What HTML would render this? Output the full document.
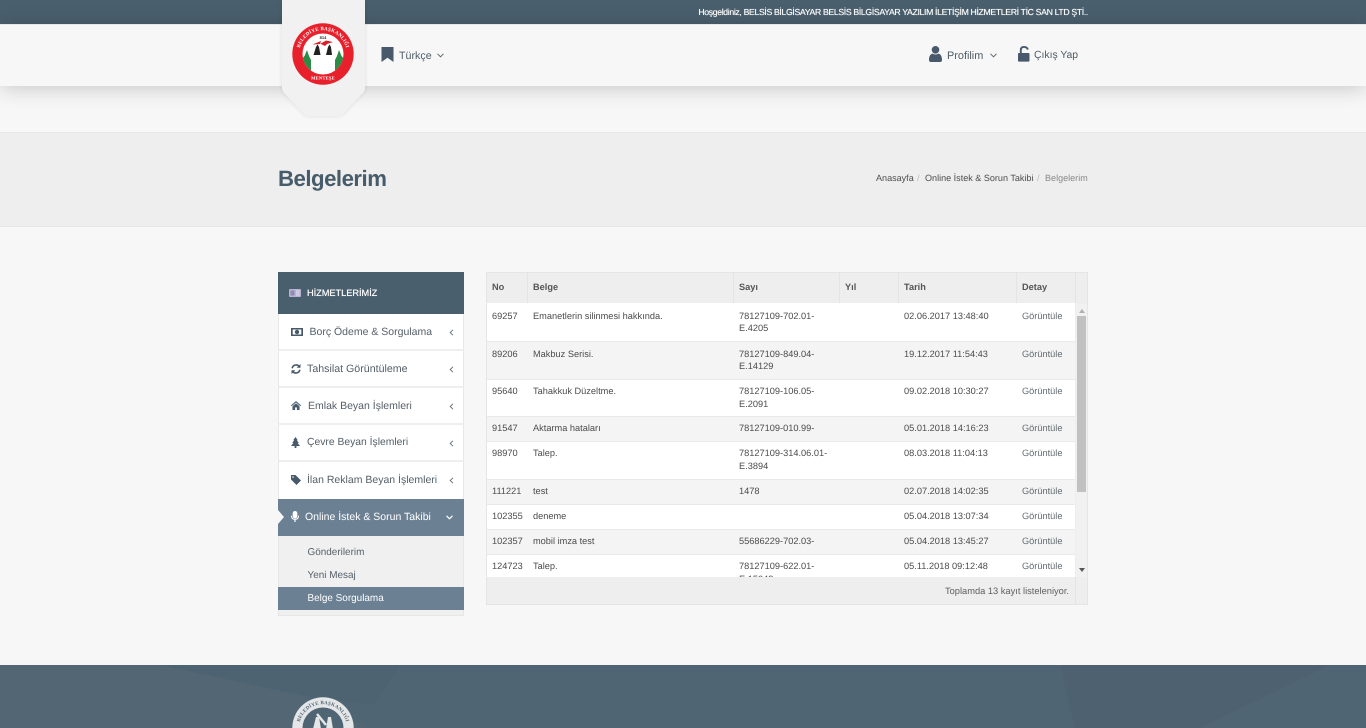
<!DOCTYPE html>
<html lang="tr">
<head>
<meta charset="utf-8">
<title>Belgelerim</title>
<style>
*{box-sizing:border-box}
html,body{margin:0;padding:0;width:1366px;height:728px;overflow:hidden;background:#f7f7f7;font-family:"Liberation Sans",sans-serif;text-rendering:geometricPrecision}
.a{position:absolute;white-space:nowrap}
#top{left:0;top:0;width:1366px;height:24px;background:#4a5f6d}
#hdr{left:0;top:24px;width:1366px;height:62px;background:#f7f7f7;box-shadow:0 2px 22px rgba(0,0,0,.2);border-top:1px solid #e4e6e7}
#band{left:0;top:132px;width:1366px;height:94.5px;background:#eeeeee;border-top:1px solid #e8e8e8;border-bottom:1px solid #e8e8e8}
#foot{left:0;top:665px;width:1366px;height:63px;background:#506573;overflow:hidden}
.t{font-size:10.7px;color:#4f5c66}
.crumb{font-size:9.05px;color:#4d4d4d;top:173px}
.mi{left:278px;width:186px;height:37px;background:#fff;border-left:1px solid #e8e8e8;border-right:1px solid #e8e8e8;border-bottom:2px solid #efefef}
.ml{font-size:10.5px;color:#545f68}
.sl{font-size:9.95px;color:#56606a}
.row{left:487px;width:588px}
.c{font-size:9.22px;color:#4c4c4c;line-height:12.6px}
.h{font-size:9.22px;font-weight:bold;color:#555;top:282px}
.sep{top:272px;width:1px;height:31px;background:#e4e4e4}
svg{position:absolute;overflow:visible}
</style>
</head>
<body>
<div class="a" id="top"></div>
<div class="a" style="right:278px;top:6px;font-size:8.7px;line-height:13px;color:#fff;letter-spacing:-.345px;text-shadow:0 0 .5px #fff;">Hoşgeldiniz, BELSİS BİLGİSAYAR BELSİS BİLGİSAYAR YAZILIM İLETİŞİM HİZMETLERİ TİC SAN LTD ŞTİ..</div>
<div class="a" id="hdr"></div>

<!-- banner -->
<svg style="left:275px;top:0" width="97" height="125" viewBox="0 0 97 125">
<defs><filter id="bs" x="-20%" y="-20%" width="140%" height="140%"><feGaussianBlur stdDeviation="2.5"/></filter></defs>
<path d="M7 0H90V88Q90 91 87 94L70 112Q67 116 63 116H34Q30 116 27 112L10 94Q7 91 7 88Z" fill="#000" opacity=".1" filter="url(#bs)"/>
<path d="M7 0H90V88Q90 91 87 94L70 112Q67 116 63 116H34Q30 116 27 112L10 94Q7 91 7 88Z" fill="#f1f1f1"/>
</svg>

<!-- logo -->
<svg style="left:292px;top:23px" width="62" height="62" viewBox="0 0 62 62">
<defs>
<path id="arcTop" d="M7.5 36A24 24 0 1 1 54.5 36"/>
<clipPath id="inner"><circle cx="31" cy="31" r="20.5"/></clipPath>
</defs>
<circle cx="31" cy="31" r="30.7" fill="#e7202c"/>
<circle cx="31" cy="31" r="20.5" fill="#fff"/>
<g clip-path="url(#inner)">
<path d="M10 50V36L12.5 33L15 27L17 33L19 37L19 50Z" fill="#2b8c45"/>
<path d="M52 50V36L49.5 33L47 27L45 33L43 37L43 50Z" fill="#2b8c45"/>
</g>
<path d="M21.5 32L24 24L25.5 21.5L27 24L28.5 32Z" fill="#222"/>
<path d="M34 32L36 24L37.5 21.5L39 24L40 32Z" fill="#222"/>
<path d="M20.5 21.5L29 18L28 21L34 17.5L41 19L35 21L33 23L29 21Z" fill="#d81f2a"/>
<text font-size="4" font-family="Liberation Sans,sans-serif" font-weight="bold" fill="#333" x="31" y="16" text-anchor="middle">814</text>
<text font-size="5" font-family="Liberation Serif,serif" font-weight="bold" fill="#fff" letter-spacing=".2"><textPath href="#arcTop" startOffset="50%" text-anchor="middle">BELEDİYE BAŞKANLIĞI</textPath></text>
<text font-size="4.6" font-family="Liberation Serif,serif" font-weight="bold" fill="#fff" x="31" y="56.5" text-anchor="middle" letter-spacing=".2">MENTEŞE</text>
</svg>

<!-- header nav -->
<svg style="left:381px;top:47px" width="13" height="15" viewBox="0 0 13 15"><path d="M.5 0H12.5V15L6.5 10.8L.5 15Z" fill="#47596a"/></svg>
<div class="a t" style="left:399px;top:49.5px;">Türkçe</div>
<svg style="left:437px;top:52.5px" width="7" height="5" viewBox="0 0 7 5"><path d="M.5.8L3.5 3.8L6.5.8" fill="none" stroke="#5b6770" stroke-width="1"/></svg>

<svg style="left:929px;top:46px" width="13" height="16" viewBox="0 0 13 16"><circle cx="6.5" cy="3.8" r="3.8" fill="#47596a"/><path d="M0 14C0 10 1.5 8 3.5 7.6Q6.5 9.3 9.5 7.6C11.5 8 13 10 13 14Q13 16 11 16H2Q0 16 0 14Z" fill="#47596a"/></svg>
<div class="a t" style="left:947px;top:49.5px;font-size:10.9px">Profilim</div>
<svg style="left:990px;top:52.5px" width="7" height="5" viewBox="0 0 7 5"><path d="M.5.8L3.5 3.8L6.5.8" fill="none" stroke="#5b6770" stroke-width="1"/></svg>

<svg style="left:1018px;top:46px" width="12" height="16" viewBox="0 0 12 16"><path d="M2.8 7V4Q2.8.9 6 .9T9.8 3.6" fill="none" stroke="#47596a" stroke-width="1.9"/><rect x="0" y="7" width="11.5" height="8.6" rx="1" fill="#47596a"/></svg>
<div class="a t" style="left:1034px;top:49.5px;font-size:10.4px">Çıkış Yap</div>

<!-- page title -->
<div class="a" id="band"></div>
<div class="a" style="left:278px;top:165px;font-size:22.2px;line-height:27px;color:#475c6b;font-weight:bold;letter-spacing:-.5px;">Belgelerim</div>
<div class="a crumb" style="left:876px;">Anasayfa</div>
<div class="a crumb" style="left:917px;color:#bbb;">/</div>
<div class="a crumb" style="left:925px;">Online İstek &amp; Sorun Takibi</div>
<div class="a crumb" style="left:1037px;color:#bbb;">/</div>
<div class="a crumb" style="left:1045px;color:#888;">Belgelerim</div>

<!-- sidebar -->
<div class="a" style="left:278px;top:272px;width:186px;height:344px;background:#f0f0f0;border:1px solid #e6e6e6"></div>
<div class="a" style="left:278px;top:272px;width:186px;height:42px;background:#4a5f6e"></div>
<svg style="left:289px;top:289px" width="12" height="8" viewBox="0 0 12 8"><rect width="12" height="8" rx="1" fill="#b9b4d6"/><rect x="1.5" y="1.5" width="4" height="5" fill="#8f8db3"/><path d="M7 2H10.5M7 4H10.5M7 6H10.5" stroke="#eee" stroke-width=".8"/></svg>
<div class="a" style="left:307px;top:287px;font-size:9.25px;line-height:12px;color:#fff;letter-spacing:-.05px;text-shadow:0 0 .5px #fff;">HİZMETLERİMİZ</div>

<div class="a mi" style="top:314px"></div>
<div class="a mi" style="top:351px"></div>
<div class="a mi" style="top:388px"></div>
<div class="a mi" style="top:425px"></div>
<div class="a mi" style="top:462px;border-bottom:0"></div>

<svg style="left:291px;top:328px" width="12" height="8" viewBox="0 0 12 8"><path fill-rule="evenodd" d="M0 0H12V8H0ZM1.7 1.5V6.5H10.3V1.5Z" fill="#47596a"/><circle cx="6" cy="4" r="2.2" fill="#47596a"/></svg>
<div class="a ml" style="left:309.5px;top:326px">Borç Ödeme &amp; Sorgulama</div>
<svg style="left:291px;top:364px" width="10" height="10" viewBox="0 0 10 10"><path d="M1.2 4.3A3.9 3.9 0 0 1 8 2.3M8.8 5.7A3.9 3.9 0 0 1 2 7.7" fill="none" stroke="#47596a" stroke-width="1.6"/><path d="M9.5 0V3.8H5.7ZM.5 10V6.2H4.3Z" fill="#47596a"/></svg>
<div class="a ml" style="left:307px;top:363px;font-size:10.65px">Tahsilat Görüntüleme</div>
<svg style="left:291px;top:401px" width="10" height="9" viewBox="0 0 10 9"><path d="M5 0L10 4.4L9.3 5.1L5 1.4L.7 5.1L0 4.4ZM1.5 5.2L5 2.2L8.5 5.2V9H5.9V6.4H4.1V9H1.5Z" fill="#47596a"/></svg>
<div class="a ml" style="left:308px;top:400px">Emlak Beyan İşlemleri</div>
<svg style="left:291px;top:437px" width="9" height="11" viewBox="0 0 9 11"><path d="M4.5 0L6.8 3.2H5.8L7.8 6H6.6L9 9H5.4V11H3.6V9H0L2.4 6H1.2L3.2 3.2H2.2Z" fill="#47596a"/></svg>
<div class="a ml" style="left:307px;top:437px;font-size:10.35px">Çevre Beyan İşlemleri</div>
<svg style="left:291px;top:475px" width="10" height="10" viewBox="0 0 10 10"><path d="M0 0H4.5L10 5.5L5.5 10L0 4.5Z" fill="#47596a"/><circle cx="2" cy="2" r=".8" fill="#fff"/></svg>
<div class="a ml" style="left:307px;top:474px">İlan Reklam Beyan İşlemleri</div>

<svg style="left:449px;top:329px" width="5" height="7" viewBox="0 0 5 7"><path d="M4 .8L1.2 3.5L4 6.2" fill="none" stroke="#6b7680" stroke-width="1"/></svg>
<svg style="left:449px;top:366px" width="5" height="7" viewBox="0 0 5 7"><path d="M4 .8L1.2 3.5L4 6.2" fill="none" stroke="#6b7680" stroke-width="1"/></svg>
<svg style="left:449px;top:403px" width="5" height="7" viewBox="0 0 5 7"><path d="M4 .8L1.2 3.5L4 6.2" fill="none" stroke="#6b7680" stroke-width="1"/></svg>
<svg style="left:449px;top:440px" width="5" height="7" viewBox="0 0 5 7"><path d="M4 .8L1.2 3.5L4 6.2" fill="none" stroke="#6b7680" stroke-width="1"/></svg>
<svg style="left:449px;top:477px" width="5" height="7" viewBox="0 0 5 7"><path d="M4 .8L1.2 3.5L4 6.2" fill="none" stroke="#6b7680" stroke-width="1"/></svg>

<div class="a" style="left:278px;top:499px;width:186px;height:37px;background:#6b8193"></div>
<svg style="left:278px;top:510px" width="6" height="14" viewBox="0 0 6 14"><path d="M0 0L6 7L0 14Z" fill="#f7f7f7"/></svg>
<svg style="left:291px;top:511px" width="8" height="11" viewBox="0 0 8 11"><rect x="1.7" y="0" width="4.6" height="7.4" rx="2.3" fill="#fff"/><path d="M.6 4.6V5.4Q.6 8.3 4 8.3T7.4 5.4V4.6" fill="none" stroke="#fff"/><path d="M4 8.3V11" stroke="#fff" stroke-width="1.2"/></svg>
<div class="a ml" style="left:305px;top:511px;color:#fff">Online İstek &amp; Sorun Takibi</div>
<svg style="left:446px;top:515px" width="7" height="5" viewBox="0 0 7 5"><path d="M.5.8L3.5 3.8L6.5.8" fill="none" stroke="#fff" stroke-width="1.2"/></svg>

<div class="a sl" style="left:307.5px;top:547px">Gönderilerim</div>
<div class="a sl" style="left:307.5px;top:570px">Yeni Mesaj</div>
<div class="a" style="left:278px;top:587px;width:186px;height:23px;background:#6b8193"></div>
<div class="a sl" style="left:307.5px;top:593px;color:#fff">Belge Sorgulama</div>

<!-- table -->
<div class="a" style="left:486px;top:272px;width:602px;height:333px;background:#eee;border:1px solid #e5e5e5"></div>
<div class="a sep" style="left:527px"></div>
<div class="a sep" style="left:733px"></div>
<div class="a sep" style="left:839px"></div>
<div class="a sep" style="left:898px"></div>
<div class="a sep" style="left:1016px"></div>
<div class="a sep" style="left:1075px"></div>
<div class="a h" style="left:492px">No</div>
<div class="a h" style="left:533px">Belge</div>
<div class="a h" style="left:739px">Sayı</div>
<div class="a h" style="left:845px">Yıl</div>
<div class="a h" style="left:904px">Tarih</div>
<div class="a h" style="left:1022px">Detay</div>

<div class="a row" style="top:303px;height:38px;background:#fff"></div>
<div class="a row" style="top:341px;height:38px;background:#f4f4f4;border-top:1px solid #e9e9e9"></div>
<div class="a row" style="top:379px;height:37px;background:#fff;border-top:1px solid #e9e9e9"></div>
<div class="a row" style="top:416px;height:25px;background:#f4f4f4;border-top:1px solid #e9e9e9"></div>
<div class="a row" style="top:441px;height:38px;background:#fff;border-top:1px solid #e9e9e9"></div>
<div class="a row" style="top:479px;height:25px;background:#f4f4f4;border-top:1px solid #e9e9e9"></div>
<div class="a row" style="top:504px;height:25px;background:#fff;border-top:1px solid #e9e9e9"></div>
<div class="a row" style="top:529px;height:25px;background:#f4f4f4;border-top:1px solid #e9e9e9"></div>
<div class="a row" style="top:554px;height:23px;background:#fff;border-top:1px solid #e9e9e9;overflow:hidden"></div>

<div class="a c" style="left:492px;top:309.5px">69257</div><div class="a c" style="left:533px;top:309.5px">Emanetlerin silinmesi hakkında.</div><div class="a c" style="left:739px;top:309.5px">78127109-702.01-<br>E.4205</div><div class="a c" style="left:904px;top:309.5px">02.06.2017 13:48:40</div><div class="a c" style="left:1022px;top:309.5px;color:#636c72">Görüntüle</div>
<div class="a c" style="left:492px;top:347.5px">89206</div><div class="a c" style="left:533px;top:347.5px">Makbuz Serisi.</div><div class="a c" style="left:739px;top:347.5px">78127109-849.04-<br>E.14129</div><div class="a c" style="left:904px;top:347.5px">19.12.2017 11:54:43</div><div class="a c" style="left:1022px;top:347.5px;color:#636c72">Görüntüle</div>
<div class="a c" style="left:492px;top:385px">95640</div><div class="a c" style="left:533px;top:385px">Tahakkuk Düzeltme.</div><div class="a c" style="left:739px;top:385px">78127109-106.05-<br>E.2091</div><div class="a c" style="left:904px;top:385px">09.02.2018 10:30:27</div><div class="a c" style="left:1022px;top:385px;color:#636c72">Görüntüle</div>
<div class="a c" style="left:492px;top:422px">91547</div><div class="a c" style="left:533px;top:422px">Aktarma hataları</div><div class="a c" style="left:739px;top:422px">78127109-010.99-</div><div class="a c" style="left:904px;top:422px">05.01.2018 14:16:23</div><div class="a c" style="left:1022px;top:422px;color:#636c72">Görüntüle</div>
<div class="a c" style="left:492px;top:447px">98970</div><div class="a c" style="left:533px;top:447px">Talep.</div><div class="a c" style="left:739px;top:447px">78127109-314.06.01-<br>E.3894</div><div class="a c" style="left:904px;top:447px">08.03.2018 11:04:13</div><div class="a c" style="left:1022px;top:447px;color:#636c72">Görüntüle</div>
<div class="a c" style="left:492px;top:485px">111221</div><div class="a c" style="left:533px;top:485px">test</div><div class="a c" style="left:739px;top:485px">1478</div><div class="a c" style="left:904px;top:485px">02.07.2018 14:02:35</div><div class="a c" style="left:1022px;top:485px;color:#636c72">Görüntüle</div>
<div class="a c" style="left:492px;top:510px">102355</div><div class="a c" style="left:533px;top:510px">deneme</div><div class="a c" style="left:904px;top:510px">05.04.2018 13:07:34</div><div class="a c" style="left:1022px;top:510px;color:#636c72">Görüntüle</div>
<div class="a c" style="left:492px;top:535px">102357</div><div class="a c" style="left:533px;top:535px">mobil imza test</div><div class="a c" style="left:739px;top:535px">55686229-702.03-</div><div class="a c" style="left:904px;top:535px">05.04.2018 13:45:27</div><div class="a c" style="left:1022px;top:535px;color:#636c72">Görüntüle</div>
<div class="a c" style="left:492px;top:560px">124723</div><div class="a c" style="left:533px;top:560px">Talep.</div><div class="a c" style="left:739px;top:560px;height:17px;overflow:hidden;">78127109-622.01-<br>E.15043</div><div class="a c" style="left:904px;top:560px">05.11.2018 09:12:48</div><div class="a c" style="left:1022px;top:560px;color:#636c72">Görüntüle</div>

<!-- footer row of table -->
<div class="a" style="left:487px;top:577px;width:600px;height:27px;background:#eee"></div>
<div class="a" style="left:1075px;top:577px;width:1px;height:27px;background:#e4e4e4"></div>
<div class="a c" style="right:297px;top:584.5px;color:#5f5f5f;font-size:9.3px">Toplamda 13 kayıt listeleniyor.</div>

<!-- scrollbar -->
<div class="a" style="left:1076px;top:304px;width:11px;height:273px;background:#f1f1f1"></div>
<div class="a" style="left:1077px;top:316px;width:9px;height:176px;background:#c1c1c1"></div>
<svg style="left:1079px;top:309px" width="6" height="4" viewBox="0 0 6 4"><path d="M0 4L3 0L6 4Z" fill="#b0b0b0"/></svg>
<svg style="left:1079px;top:568px" width="6" height="4" viewBox="0 0 6 4"><path d="M0 0L3 4L6 0Z" fill="#555"/></svg>

<!-- footer -->
<div class="a" id="foot">
<svg style="left:0;top:0" width="1366" height="63" viewBox="0 0 1366 63">
<path d="M160 0H400L375 40L300 30Z" fill="#4b606e" opacity=".3"/>
<path d="M1060 0H1330L1200 63H1075Z" fill="#4a5f6d" opacity=".55"/>
<path d="M0 0H160L300 30L370 63H0Z" fill="#556976" opacity=".4"/>
</svg>
<svg style="left:292px;top:32px" width="62" height="62" viewBox="0 0 62 62">
<defs><path id="arcF" d="M7.5 36A24 24 0 1 1 54.5 36"/></defs>
<circle cx="31" cy="31" r="30.7" fill="#e4e6e7"/>
<circle cx="31" cy="31" r="20.5" fill="#506573"/>
<path d="M21 32L24 20L27 20L29 32ZM34 32L36 20L39 20L41 32Z" fill="#e4e6e7"/>
<path d="M25 17L34 28" stroke="#e4e6e7" stroke-width="2.5"/>
<text font-size="5" font-family="Liberation Serif,serif" font-weight="bold" fill="#506573" letter-spacing=".2"><textPath href="#arcF" startOffset="50%" text-anchor="middle">BELEDİYE BAŞKANLIĞI</textPath></text>
</svg>
</div>
</body>
</html>
